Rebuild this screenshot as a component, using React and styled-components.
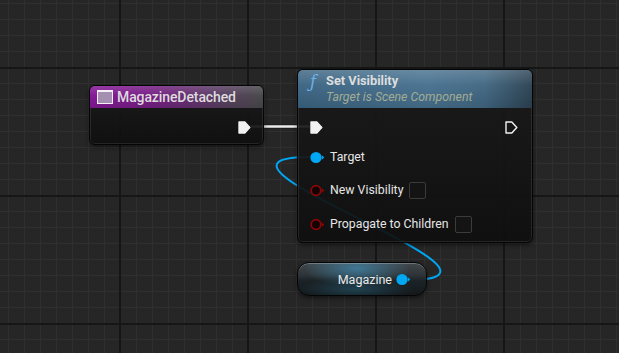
import React from 'react'
import styled, { createGlobalStyle } from 'styled-components'

const Global = createGlobalStyle`
  html, body {
    margin: 0;
    padding: 0;
    background: #262626;
    overflow: hidden;
  }
  body {
    font-family: Roboto, "Noto Sans", "Liberation Sans", sans-serif;
  }
`

const Canvas = styled.div`
  position: relative;
  width: 619px;
  height: 353px;
  overflow: hidden;
  background-color: #262626;
  background-image:
    linear-gradient(to right, #161616 2px, transparent 2px),
    linear-gradient(to bottom, #161616 2px, transparent 2px),
    linear-gradient(to right, #2f2f2f 1px, transparent 1px),
    linear-gradient(to bottom, #2f2f2f 1px, transparent 1px);
  background-size: 128px 128px, 128px 128px, 16px 16px, 16px 16px;
  background-position: 119px 0, 0 67px, 8px 0, 0 3px;
`

const Wires = styled.svg`
  position: absolute;
  left: 0;
  top: 0;
  width: 619px;
  height: 353px;
  pointer-events: none;
`

const Node = styled.div`
  position: absolute;
  left: ${p => p.$x}px;
  top: ${p => p.$y}px;
  width: ${p => p.$w}px;
  height: ${p => p.$h}px;
  box-sizing: border-box;
  border-radius: 6px;
  border: 1px solid #050505;
  box-shadow: inset 0 0 0 1px rgba(255, 255, 255, 0.09), 0 2px 4px rgba(0, 0, 0, 0.5);
  background: linear-gradient(180deg, rgba(26, 26, 26, 0.92) 0%, rgba(14, 14, 14, 0.92) 100%);
  display: flex;
  flex-direction: column;
  overflow: hidden;
`

const EventHeader = styled.div`
  height: 22px;
  flex: none;
  display: flex;
  align-items: center;
  gap: 4px;
  padding-left: 7px;
  background:
    linear-gradient(180deg, rgba(255, 255, 255, 0.14) 0%, rgba(255, 255, 255, 0) 45%, rgba(0, 0, 0, 0.12) 100%),
    linear-gradient(90deg, #861a98 0%, #781f86 35%, #5a3f63 75%, #4a4a4c 100%);
`

const EventIcon = styled.div`
  width: 16px;
  height: 14px;
  box-sizing: border-box;
  border: 1.5px solid #f4f0f6;
  background: #a58fb0;
  border-top-width: 2.5px;
`

const HeaderTitle = styled.span`
  color: #dcdcdc;
  font-size: 14px;
  font-weight: 500;
  letter-spacing: -0.1px;
  line-height: 15px;
`

const FuncHeader = styled.div`
  height: 38px;
  flex: none;
  display: flex;
  gap: 8px;
  padding: 3px 0 0 12px;
  box-sizing: border-box;
  background:
    linear-gradient(180deg, rgba(255, 255, 255, 0.18) 0%, rgba(255, 255, 255, 0.03) 40%, rgba(0, 0, 0, 0.1) 100%),
    linear-gradient(90deg, #3b6482 0%, #47718f 55%, #416782 80%, #2c4252 100%);
`

const FuncIcon = styled.span`
  color: #6fb2ea;
  font-family: "DejaVu Serif", serif;
  font-style: italic;
  font-size: 16px;
  line-height: 18px;
  width: 8px;
`

const TitleBlock = styled.div`
  display: flex;
  flex-direction: column;
`

const FuncTitle = styled.span`
  color: #dedede;
  font-size: 12.8px;
  font-weight: 700;
  line-height: 16px;
`

const FuncSub = styled.span`
  color: #a3ad95;
  font-size: 12.3px;
  font-style: italic;
  line-height: 17px;
`

const Body = styled.div`
  flex: 1;
  display: flex;
  flex-direction: column;
  padding: 8px ${p => p.$pr || 12}px 0 12px;
`

const Row = styled.div`
  height: 22px;
  margin-top: ${p => p.$mt || 0}px;
  display: flex;
  align-items: center;
  justify-content: ${p => p.$justify || 'flex-start'};
`

const PinLabel = styled.span`
  color: #e6e6e6;
  font-size: 12.3px;
  line-height: 14px;
  margin-left: 5px;
`

const Check = styled.div`
  width: 17px;
  height: 17px;
  box-sizing: border-box;
  margin-left: 6px;
  border: 1px solid #3b3b3b;
  border-radius: 2px;
  background: #141414;
`

const VarNode = styled.div`
  position: absolute;
  left: ${p => p.$x}px;
  top: ${p => p.$y}px;
  width: ${p => p.$w}px;
  height: 34px;
  box-sizing: border-box;
  border-radius: 12px;
  border: 1px solid #050505;
  box-shadow: inset 0 1px 0 rgba(255, 255, 255, 0.25), 0 2px 4px rgba(0, 0, 0, 0.5);
  background:
    radial-gradient(ellipse 42% 55% at 46% 18%, rgba(70, 165, 215, 0.55), rgba(70, 165, 215, 0) 100%),
    radial-gradient(ellipse 45% 35% at 45% 82%, rgba(40, 110, 140, 0.45), rgba(40, 110, 140, 0) 100%),
    linear-gradient(180deg, #41474b 0%, #2d3336 38%, #1c2326 55%, #14181a 100%);
  display: flex;
  align-items: center;
  justify-content: flex-end;
  padding-right: 15px;
  gap: 4px;
`

const VarLabel = styled.span`
  color: #e8e8e8;
  font-size: 12.5px;
  line-height: 14px;
  margin-top: 1px;
`

const ExecPin = ({ filled }) => (
  <svg width="13" height="13" viewBox="0 0 13 13">
    <path
      d="M1 1 H6.8 L11.8 6.5 L6.8 12 H1 Z"
      fill={filled ? '#f2f2f2' : 'none'}
      stroke="#f2f2f2"
      strokeWidth="1.4"
      strokeLinejoin="round"
    />
  </svg>
)

const DataPin = ({ color, connected }) => (
  <svg width="15" height="13" viewBox="0 0 15 13">
    <circle
      cx="6"
      cy="6.5"
      r={connected ? 5.6 : 4.8}
      fill={connected ? color : '#120202'}
      stroke={color}
      strokeWidth={connected ? 0 : 1.8}
    />
    <path d="M11.8 4.2 L14.3 6.5 L11.8 8.8 Z" fill={color} />
  </svg>
)

const BLUE = '#00a7f2'
const RED = '#8c0606'

export default function App() {
  return (
    <>
      <Global />
      <Canvas>
        <Wires viewBox="0 0 619 353">
          <path d="M251 126.5 H310" stroke="#111" strokeWidth="4" fill="none" opacity="0.6" />
          <path d="M251 126.5 H310" stroke="#ececec" strokeWidth="2.4" fill="none" />
          <path
            d="M407 280 C553 280, 164 157, 310 157"
            stroke={BLUE}
            strokeWidth="2"
            fill="none"
          />
        </Wires>

        <Node $x={89} $y={85} $w={175} $h={60}>
          <EventHeader>
            <EventIcon />
            <HeaderTitle>MagazineDetached</HeaderTitle>
          </EventHeader>
          <Body $pr={12}>
            <Row $justify="flex-end">
              <ExecPin filled />
            </Row>
          </Body>
        </Node>

        <Node $x={297} $y={69} $w={236} $h={174}>
          <FuncHeader>
            <FuncIcon>ƒ</FuncIcon>
            <TitleBlock>
              <FuncTitle>Set Visibility</FuncTitle>
              <FuncSub>Target is Scene Component</FuncSub>
            </TitleBlock>
          </FuncHeader>
          <Body $pr={14}>
            <Row $justify="space-between">
              <ExecPin filled />
              <ExecPin />
            </Row>
            <Row $mt={8}>
              <DataPin color={BLUE} connected />
              <PinLabel>Target</PinLabel>
            </Row>
            <Row $mt={11}>
              <DataPin color={RED} />
              <PinLabel>New Visibility</PinLabel>
              <Check />
            </Row>
            <Row $mt={12}>
              <DataPin color={RED} />
              <PinLabel>Propagate to Children</PinLabel>
              <Check />
            </Row>
          </Body>
        </Node>

        <VarNode $x={297} $y={262} $w={130}>
          <VarLabel>Magazine</VarLabel>
          <DataPin color={BLUE} connected />
        </VarNode>
      </Canvas>
    </>
  )
}
